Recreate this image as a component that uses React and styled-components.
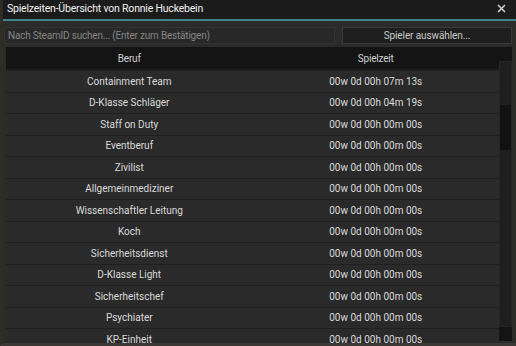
import React from 'react';
import styled, { createGlobalStyle } from 'styled-components';

const rows = [
  ['Containment Team', '00w 0d 00h 07m 13s'],
  ['D-Klasse Schläger', '00w 0d 00h 04m 19s'],
  ['Staff on Duty', '00w 0d 00h 00m 00s'],
  ['Eventberuf', '00w 0d 00h 00m 00s'],
  ['Zivilist', '00w 0d 00h 00m 00s'],
  ['Allgemeinmediziner', '00w 0d 00h 00m 00s'],
  ['Wissenschaftler Leitung', '00w 0d 00h 00m 00s'],
  ['Koch', '00w 0d 00h 00m 00s'],
  ['Sicherheitsdienst', '00w 0d 00h 00m 00s'],
  ['D-Klasse Light', '00w 0d 00h 00m 00s'],
  ['Sicherheitschef', '00w 0d 00h 00m 00s'],
  ['Psychiater', '00w 0d 00h 00m 00s'],
  ['KP-Einheit', '00w 0d 00h 00m 00s'],
];

export default function App() {
  return (
    <>
      <GlobalStyle />
      <Frame>
        <TitleBar>
          <Title>Spielzeiten-Übersicht von Ronnie Huckebein</Title>
          <CloseButton>
            <svg width='9' height='9' viewBox='0 0 9 9'>
              <path d='M1 1L8 8M8 1L1 8' stroke='#d0d0d0' strokeWidth='1.6' />
            </svg>
          </CloseButton>
        </TitleBar>
        <Toolbar>
          <Search placeholder='Nach SteamID suchen... (Enter zum Bestätigen)' />
          <PickButton>Spieler auswählen...</PickButton>
        </Toolbar>
        <Table>
          <Header>
            <HeadCell>Beruf</HeadCell>
            <HeadCell>Spielzeit</HeadCell>
          </Header>
          <Body>
            <Rows>
              {rows.map(([job, time]) => (
                <Row key={job}>
                  <Cell>{job}</Cell>
                  <Cell>{time}</Cell>
                </Row>
              ))}
            </Rows>
            <ScrollBar>
              <Track>
                <Thumb />
              </Track>
              <ScrollEnd />
            </ScrollBar>
          </Body>
        </Table>
      </Frame>
    </>
  );
}

const GlobalStyle = createGlobalStyle`
  html, body {
    margin: 0;
    padding: 0;
    background: #2e2c26;
  }
  * {
    box-sizing: border-box;
  }
`;

const Frame = styled.div`
  display: flex;
  flex-direction: column;
  width: 516px;
  height: 346px;
  overflow: hidden;
  background: #2b2b2a;
  font-family: Roboto, 'Liberation Sans', sans-serif;
  font-size: 10px;
  letter-spacing: -0.2px;
  color: #d8d8d8;
  border-left: 3px solid #2f2d25;
  border-bottom: 3px solid #3a3935;
`;

const TitleBar = styled.div`
  display: flex;
  align-items: center;
  justify-content: space-between;
  height: 21px;
  flex-shrink: 0;
  margin-left: -3px;
  padding: 0 10px 2px 7px;
  background: #1b1b1b;
  border-bottom: 2px solid #3f8587;
`;

const Title = styled.span`
  font-size: 10.5px;
  color: #f0f0f0;
`;

const CloseButton = styled.span`
  display: flex;
  align-items: center;
`;

const Toolbar = styled.div`
  display: flex;
  gap: 7px;
  padding: 6px 4px 3px 1px;
  flex-shrink: 0;
`;

const Search = styled.input`
  flex: 1;
  height: 17px;
  padding: 0 3px;
  border: 1px solid #333;
  background: #282828;
  color: #ddd;
  font-family: inherit;
  font-size: 10px;
  letter-spacing: -0.2px;
  outline: none;

  &::placeholder {
    color: #858585;
  }
`;

const PickButton = styled.button`
  width: 170px;
  height: 17px;
  padding: 0;
  border: 1px solid #3a3a3a;
  background: #1f1f1f;
  color: #c8c8c8;
  font-family: inherit;
  font-size: 10px;
  letter-spacing: -0.1px;
`;

const Table = styled.div`
  display: flex;
  flex-direction: column;
  flex: 1;
  min-height: 0;
  margin: 0 4px 0 3px;
`;

const Header = styled.div`
  display: flex;
  height: 24px;
  flex-shrink: 0;
  padding-right: 13px;
  background: #141414;
  border-bottom: 2px solid #1e1e1e;
  color: #cfcfcf;
`;

const HeadCell = styled.div`
  flex: 1;
  display: flex;
  align-items: center;
  justify-content: center;
`;

const Body = styled.div`
  display: flex;
  flex: 1;
  min-height: 0;
`;

const Rows = styled.div`
  flex: 1;
  overflow: hidden;
`;

const Row = styled.div`
  display: flex;
  height: 21.5px;
  background: #2a2a2a;
  border-bottom: 1px solid #1f1f1f;
  color: #dadada;
  letter-spacing: 0;
`;

const Cell = styled.div`
  flex: 1;
  display: flex;
  align-items: center;
  justify-content: center;
`;

const ScrollBar = styled.div`
  display: flex;
  flex-direction: column;
  width: 13px;
  margin-top: -10px;
  margin-bottom: 2px;
  position: relative;
`;

const Track = styled.div`
  flex: 1;
  padding-top: 43px;
  background: #1f1f1f;
  border: 1px solid #262626;
`;

const Thumb = styled.div`
  height: 45px;
  background: #121212;
`;

const ScrollEnd = styled.div`
  height: 14px;
  background: #141414;
`;
